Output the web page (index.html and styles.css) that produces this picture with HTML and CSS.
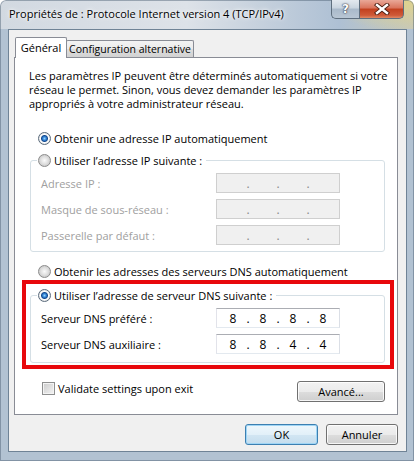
FILE: index.html
```html
<!DOCTYPE html>
<html lang="fr">
<head>
    <meta charset="UTF-8">
    <meta name="viewport" content="width=device-width, initial-scale=1.0">
    <title>Propriétés de : Protocole Internet version 4 (TCP/IPv4)</title>
    <link rel="stylesheet" href="styles.css">
</head>
<body>
    <div class="fenetre">
        <div class="barre">
            <span class="titre">Propriétés de : Protocole Internet version 4 (TCP/IPv4)</span>
            <div class="commandes">
                <span class="btn-aide">?</span>
                <span class="btn-fermer">
                    <svg width="16" height="12" viewBox="0 0 16 12">
                        <path d="M3 2 L13 10 M13 2 L3 10" stroke="#4a1c10" stroke-width="4.2" stroke-linecap="square"/>
                        <path d="M3 2 L13 10 M13 2 L3 10" stroke="#fff" stroke-width="2.4" stroke-linecap="square"/>
                    </svg>
                </span>
            </div>
        </div>

        <div class="client">
            <div class="onglets">
                <div class="onglet actif">Général</div>
                <div class="onglet">Configuration alternative</div>
            </div>

            <div class="panneau">
                <p class="intro">Les paramètres IP peuvent être déterminés automatiquement si votre<br>réseau le permet. Sinon, vous devez demander les paramètres IP<br>appropriés à votre administrateur réseau.</p>

                <div class="option premier"><span class="radio coche"></span>Obtenir une adresse IP automatiquement</div>

                <div class="groupe groupe-ip">
                    <div class="entete"><span class="radio"></span>Utiliser l’adresse IP suivante :</div>
                    <div class="ligne inactive">
                        <span>Adresse IP :</span>
                        <div class="ip"><span class="o"></span><span class="p">.</span><span class="o"></span><span class="p">.</span><span class="o"></span><span class="p">.</span><span class="o"></span></div>
                    </div>
                    <div class="ligne inactive">
                        <span>Masque de sous-réseau :</span>
                        <div class="ip"><span class="o"></span><span class="p">.</span><span class="o"></span><span class="p">.</span><span class="o"></span><span class="p">.</span><span class="o"></span></div>
                    </div>
                    <div class="ligne inactive">
                        <span>Passerelle par défaut :</span>
                        <div class="ip"><span class="o"></span><span class="p">.</span><span class="o"></span><span class="p">.</span><span class="o"></span><span class="p">.</span><span class="o"></span></div>
                    </div>
                </div>

                <div class="option dns-auto"><span class="radio"></span>Obtenir les adresses des serveurs DNS automatiquement</div>

                <div class="groupe groupe-dns">
                    <div class="entete"><span class="radio coche"></span>Utiliser l’adresse de serveur DNS suivante :</div>
                    <div class="ligne">
                        <span>Serveur DNS préféré :</span>
                        <div class="ip"><span class="o">8</span><span class="p">.</span><span class="o">8</span><span class="p">.</span><span class="o">8</span><span class="p">.</span><span class="o">8</span></div>
                    </div>
                    <div class="ligne">
                        <span>Serveur DNS auxiliaire :</span>
                        <div class="ip"><span class="o">8</span><span class="p">.</span><span class="o">8</span><span class="p">.</span><span class="o">4</span><span class="p">.</span><span class="o">4</span></div>
                    </div>
                </div>

                <div class="bas">
                    <label class="case"><span class="carre"></span>Validate settings upon exit</label>
                    <span class="bouton avance">Avancé...</span>
                </div>
            </div>

            <div class="actions">
                <span class="bouton ok">OK</span>
                <span class="bouton annuler">Annuler</span>
            </div>
        </div>
    </div>
</body>
</html>
```

FILE: styles.css
```css
body {
    margin: 0;
    background: #fff;
    font-family: "Open Sans", "Noto Sans", Arial, sans-serif;
    font-size: 11px;
    color: #000;
}

.fenetre {
    width: 414px;
    height: 461px;
    box-sizing: border-box;
    padding: 0 7px 9px 8px;
    display: flex;
    flex-direction: column;
    border-radius: 6px 6px 0 0;
    background:
        linear-gradient(to bottom, transparent 29px, #b2c2d2 29px),
        radial-gradient(ellipse 70px 30px at 96% 0%, rgba(235, 215, 120, .75), transparent),
        radial-gradient(ellipse 90px 40px at 72% 30%, rgba(120, 150, 200, .55), transparent),
        linear-gradient(to right, #d2d9e1 0%, #dde2e8 45%, #c3cfdc 65%, #aec0d4 82%, #c9c9b6 100%);
    box-shadow: inset 0 0 0 1px rgba(70, 90, 110, .45);
}

/* barre de titre */
.barre {
    height: 29px;
    display: flex;
    justify-content: space-between;
    align-items: flex-start;
}

.titre {
    padding: 6px 0 0 1px;
    line-height: 16px;
    white-space: nowrap;
    text-shadow: 0 0 6px #fff, 0 0 3px #fff;
}

.commandes {
    display: flex;
    margin-right: 3px;
}

.btn-aide,
.btn-fermer {
    height: 19px;
    box-sizing: border-box;
    border: 1px solid #5e6e7e;
    border-top: none;
    display: flex;
    align-items: center;
    justify-content: center;
}

.btn-aide {
    width: 28px;
    border-right: none;
    border-radius: 0 0 0 5px;
    background: linear-gradient(#e3e9ef 0%, #c9d4df 45%, #a9b9ca 50%, #b8c6d4 100%);
    color: #fff;
    font-family: "DejaVu Sans", sans-serif;
    font-weight: bold;
    font-size: 12px;
    text-shadow: 0 0 2px #223, 0 0 1px #223;
}

.btn-fermer {
    width: 45px;
    border-radius: 0 0 5px 0;
    background: linear-gradient(#e9a898 0%, #d9735c 45%, #c2401f 50%, #cf5a38 85%, #e08a66 100%);
}

/* zone client */
.client {
    flex: 1;
    box-sizing: border-box;
    border: 1px solid #6f8396;
    background: #f0f0f0;
    padding: 7px 8px 0 5px;
}

.onglets {
    display: flex;
    align-items: flex-end;
    height: 20px;
    margin-left: 1px;
}

.onglet {
    height: 17px;
    box-sizing: border-box;
    width: 128px;
    border: 1px solid #898c95;
    border-bottom: none;
    border-radius: 2px 2px 0 0;
    text-align: center;
    font-size: 10.5px;
    line-height: 16px;
    white-space: nowrap;
    background: linear-gradient(#f3f3f3 0%, #ebebeb 50%, #dedede 51%, #d2d2d2 100%);
}

.onglet.actif {
    width: 52px;
    height: 21px;
    margin-bottom: -1px;
    margin-right: -1px;
    font-size: 11px;
    line-height: 19px;
    background: #fff;
    position: relative;
    z-index: 1;
}

.panneau {
    height: 358px;
    box-sizing: border-box;
    border: 1px solid #898c95;
    background: #fff;
}

.intro {
    margin: 0;
    padding: 11px 0 0 14px;
    line-height: 14px;
}

.option,
.entete {
    display: flex;
    align-items: center;
    height: 16px;
    white-space: nowrap;
}

.option {
    margin-left: 23px;
}

.option.premier {
    margin-top: 19px;
}

.option.dns-auto {
    margin-top: 11px;
}

.radio {
    flex: none;
    width: 13px;
    height: 13px;
    box-sizing: border-box;
    margin-right: 3px;
    border-radius: 50%;
    border: 1px solid #8b8b8b;
    background: radial-gradient(circle, #fafafa 0, #e4e4e4 3px, #cacaca 6px);
}

.radio.coche {
    border-color: #5a6b7c;
    background: radial-gradient(circle, #8fd4ff 0, #2a78cc 2px, #164a8c 3px, #fff 4px, #dcdcdc 6px);
}

.groupe {
    position: relative;
    margin: 14px 12px 0 15px;
    padding: 0 0 6px 10px;
    border: 1px solid #d5dfe5;
    border-radius: 3px;
}

.groupe-dns {
    margin-top: 16px;
    padding-bottom: 8px;
}

/* encadré rouge autour du DNS manuel */
.groupe-dns::after {
    content: "";
    position: absolute;
    top: -16px;
    left: -9px;
    right: -10px;
    bottom: -7px;
    border: 4px solid #e8080c;
}

.entete {
    width: fit-content;
    margin: -9px 0 0 -4px;
    padding: 0 4px 0 1px;
    background: #fff;
}

.ligne {
    display: grid;
    grid-template-columns: 175px 124px;
    align-items: center;
    height: 20px;
    margin-top: 6px;
}

.entete + .ligne {
    margin-top: 5px;
}

.ligne.inactive {
    color: #a0a0a0;
}

.ip {
    height: 20px;
    box-sizing: border-box;
    display: flex;
    align-items: center;
    padding-left: 4px;
    border: 1px solid;
    border-color: #abadb3 #dbdfe6 #e3e9ef #e2e3ea;
    background: #fff;
    color: #000;
    font-size: 12px;
}

.inactive .ip {
    background: #f0f0f0;
    border-color: #cfcfcf;
    color: #8a8a8a;
}

.ip .o {
    width: 24px;
    text-align: center;
}

.ip .p {
    width: 6px;
    text-align: center;
}

.bas {
    display: flex;
    justify-content: space-between;
    align-items: flex-start;
    margin: 18px 12px 0 27px;
}

.case {
    display: flex;
    align-items: center;
    height: 13px;
    margin-top: 1px;
}

.carre {
    width: 13px;
    height: 13px;
    box-sizing: border-box;
    margin-right: 3px;
    border: 1px solid #8e8f8f;
    background: linear-gradient(135deg, #cbcbcb, #f4f4f4);
    box-shadow: inset 0 0 0 1px #f4f4f4;
}

.bouton {
    height: 21px;
    box-sizing: border-box;
    display: flex;
    align-items: center;
    justify-content: center;
    border: 1px solid #707070;
    border-radius: 3px;
    background: linear-gradient(#f2f2f2 0%, #ebebeb 50%, #dddddd 51%, #cfcfcf 100%);
    box-shadow: inset 0 0 0 1px rgba(255, 255, 255, .8);
}

.avance {
    width: 88px;
}

.actions {
    display: flex;
    justify-content: flex-end;
    gap: 8px;
    margin-top: 9px;
}

.ok {
    width: 73px;
    border-color: #3c7fb1;
    background: linear-gradient(#eef7fc 0%, #e2f0f9 50%, #d2e6f3 51%, #c4ddee 100%);
    box-shadow: inset 0 0 0 1px #9fd5f5;
}

.annuler {
    width: 72px;
}
```
